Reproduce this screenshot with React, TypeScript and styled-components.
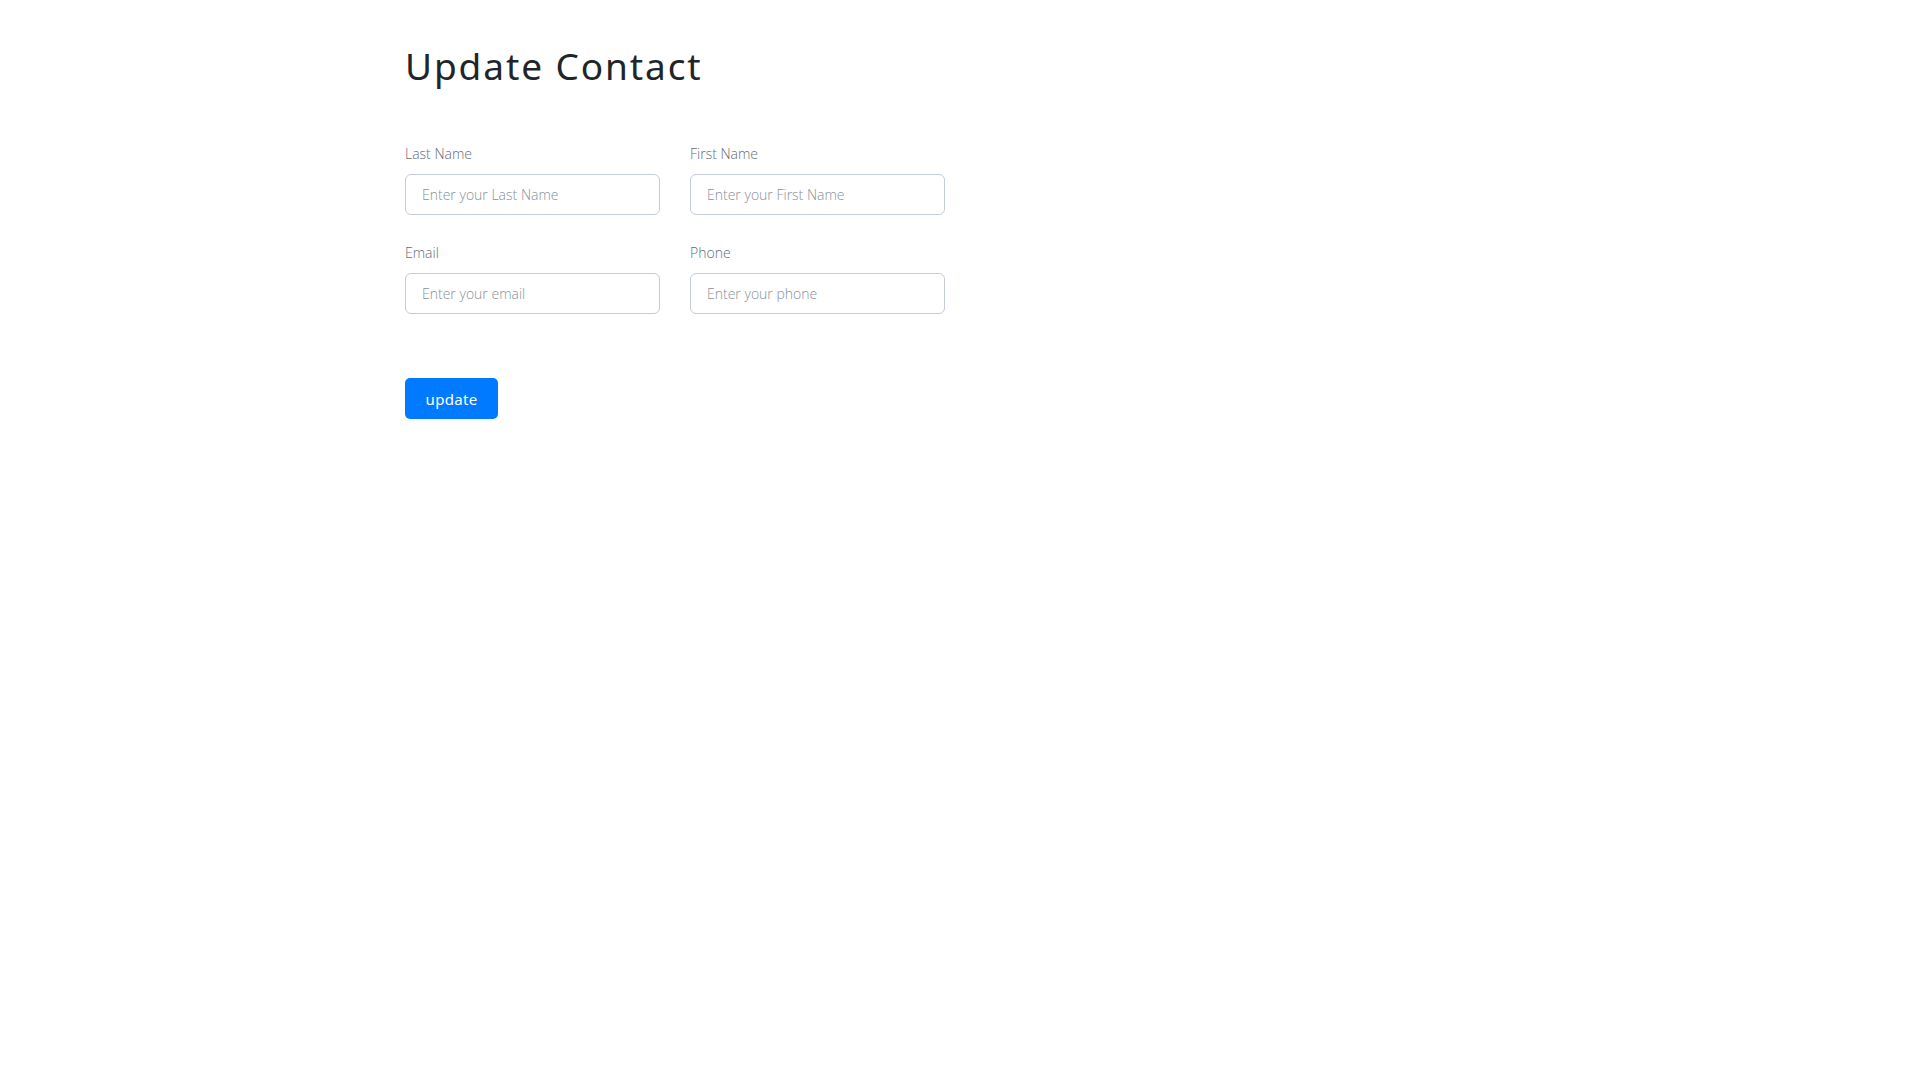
import React from "react";
import styled, { createGlobalStyle } from "styled-components";

const GlobalStyle = createGlobalStyle`
  html, body {
    margin: 0;
    padding: 0;
    background: #ffffff;
  }
  body {
    font-family: "Open Sans", "Liberation Sans", sans-serif;
    color: #212529;
  }
  * { box-sizing: border-box; }
`;

const Container = styled.div`
  width: 1140px;
  margin: 0 auto;
  padding: 44px 15px 0;
`;

const Title = styled.h1`
  margin: 0 0 55px;
  font-family: "Noto Sans", "Liberation Sans", sans-serif;
  font-weight: 400;
  font-size: 37px;
  line-height: 44px;
  color: #212529;
  letter-spacing: 1.9px;
`;

const Form = styled.form`
  display: flex;
  flex-direction: column;
  align-items: flex-start;
`;

const Grid = styled.div`
  display: grid;
  grid-template-columns: 255px 255px;
  column-gap: 30px;
  row-gap: 27px;
`;

const Field = styled.div`
  display: flex;
  flex-direction: column;
`;

const Label = styled.label`
  font-family: "Open Sans", "Liberation Sans", sans-serif;
  font-weight: 300;
  font-size: 14px;
  line-height: 21px;
  color: #666b72;
  margin-bottom: 10px;
`;

const Input = styled.input`
  width: 100%;
  height: 41px;
  padding: 0 16px;
  border: 1px solid #c3ccd8;
  border-radius: 6px;
  font-family: "Open Sans", "Liberation Sans", sans-serif;
  font-weight: 300;
  font-size: 14px;
  color: #495057;
  background: #fff;
  outline: none;
  &::placeholder {
    color: #8a9099;
  }
`;

const Button = styled.button`
  margin-top: 64px;
  width: 93px;
  height: 41px;
  border: none;
  border-radius: 5px;
  background: #007bff;
  color: #ffffff;
  font-family: "Noto Sans", "Liberation Sans", sans-serif;
  font-size: 15px;
  font-weight: 400;
  letter-spacing: 0.3px;
  cursor: pointer;
`;

const fields = [
  { id: "lastName", label: "Last Name", placeholder: "Enter your Last Name" },
  { id: "firstName", label: "First Name", placeholder: "Enter your First Name" },
  { id: "email", label: "Email", placeholder: "Enter your email" },
  { id: "phone", label: "Phone", placeholder: "Enter your phone" },
];

export default function App() {
  return (
    <>
      <GlobalStyle />
      <Container>
        <Title>Update Contact</Title>
        <Form onSubmit={(e) => e.preventDefault()}>
          <Grid>
            {fields.map((f) => (
              <Field key={f.id}>
                <Label htmlFor={f.id}>{f.label}</Label>
                <Input id={f.id} type="text" placeholder={f.placeholder} />
              </Field>
            ))}
          </Grid>
          <Button type="submit">update</Button>
        </Form>
      </Container>
    </>
  );
}
